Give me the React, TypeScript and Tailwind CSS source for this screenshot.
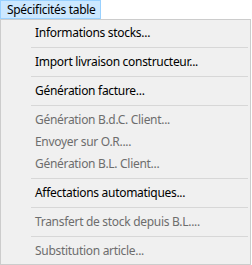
import React from "react";

type Entry = { label: string; disabled?: boolean } | "sep";

// contenu du menu
const ENTRIES: Entry[] = [
    { label: "Informations stocks..." },
    "sep",
    { label: "Import livraison constructeur..." },
    "sep",
    { label: "Génération facture..." },
    "sep",
    { label: "Génération B.d.C. Client...", disabled: true },
    { label: "Envoyer sur O.R....", disabled: true },
    { label: "Génération B.L. Client...", disabled: true },
    "sep",
    { label: "Affectations automatiques..." },
    "sep",
    { label: "Transfert de stock depuis B.L....", disabled: true },
    "sep",
    { label: "Substitution article...", disabled: true },
];

const App = () => {
    return (
        <div className="w-[252px] h-[265px] bg-white overflow-hidden text-[12px] leading-none tracking-[-0.3px] font-['Noto_Sans',sans-serif]">
            {/* barre de menu */}
            <div className="h-[19px] flex">
                <div className="w-[101px] h-[19px] bg-[#cce8ff] border border-[#99d1ff] pl-[6px] flex items-center text-black whitespace-nowrap">
                    Spécificités table
                </div>
            </div>

            {/* menu déroulant */}
            <div className="w-[251px] border border-[#cccccc] bg-[#f0f0f0] py-[2px]">
                {ENTRIES.map((entry, index) =>
                    entry === "sep" ? (
                        <div key={index} className="h-[7px] flex items-center pl-[30px] pr-[2px]">
                            <div className="h-px w-full bg-[#d7d7d7]" />
                        </div>
                    ) : (
                        <div
                            key={index}
                            className={`h-[22px] flex items-center pl-[34px] whitespace-nowrap ${
                                entry.disabled ? "text-[#6d6d6d]" : "text-black"
                            }`}
                        >
                            {entry.label}
                        </div>
                    )
                )}
            </div>
        </div>
    );
};

export default App;
